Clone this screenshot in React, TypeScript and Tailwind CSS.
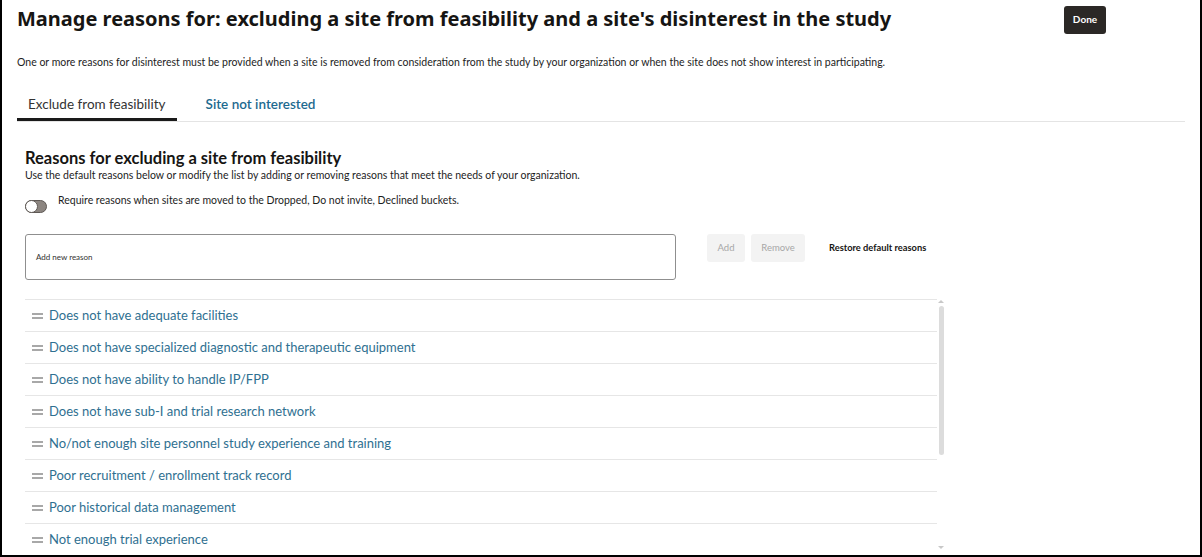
const reasons = [
  "Does not have adequate facilities",
  "Does not have specialized diagnostic and therapeutic equipment",
  "Does not have ability to handle IP/FPP",
  "Does not have sub-I and trial research network",
  "No/not enough site personnel study experience and training",
  "Poor recruitment / enrollment track record",
  "Poor historical data management",
  "Not enough trial experience",
];

function DragHandle() {
  return (
    <span className="mr-[6px] flex w-[11px] flex-col gap-[2px]">
      <span className="h-[2px] w-full bg-[#a8a8a8]" />
      <span className="h-[2px] w-full bg-[#a8a8a8]" />
    </span>
  );
}

function Toggle() {
  return (
    <span className="relative inline-flex h-[13px] w-[22px] items-center rounded-full border border-[#5f5955] bg-[#8c8580]">
      <span className="absolute left-[-1px] top-[-1px] h-[13px] w-[13px] rounded-full border border-[#5f5955] bg-white" />
    </span>
  );
}

export default function App() {
  return (
    <div
      className="h-[557px] w-[1202px] overflow-hidden border-x-2 border-b-2 border-black bg-white px-[15px] text-[#1d1d1d]"
      style={{ fontFamily: "Lato, 'Noto Sans', sans-serif" }}
    >
      {/* header */}
      <div className="flex h-[38px] items-center justify-between pr-[79px]">
        <h1
          className="text-[20px] font-bold leading-none text-[#161513]"
          style={{ fontFamily: "'Noto Sans', sans-serif" }}
        >
          Manage reasons for: excluding a site from feasibility and a site's disinterest in the study
        </h1>
        <button
          type="button"
          className="mt-[1px] h-[28px] w-[42px] rounded-[3px] bg-[#2b2826] text-[10px] font-bold text-white"
        >
          Done
        </button>
      </div>

      <p className="mt-[16px] text-[10.5px] leading-[16px] text-[#1d1d1d]">
        One or more reasons for disinterest must be provided when a site is removed from consideration from the study by your organization or when the site does not show interest in participating.
      </p>

      {/* tabs */}
      <div className="mt-[14px] flex gap-[18px] border-b border-[#e4e4e4]">
        <div className="flex h-[37px] items-center border-b-[3px] border-[#1a1a1a] px-[11px] pt-[7px] text-[13.5px] text-[#333]">
          Exclude from feasibility
        </div>
        <div className="flex h-[37px] items-center px-[11px] pt-[4px] text-[13.5px] font-semibold text-[#1d6a8f]">
          Site not interested
        </div>
      </div>

      <div className="px-[8px]">
        <h2 className="mt-[26px] text-[16.5px] font-bold leading-[20px] text-[#161513]">
          Reasons for excluding a site from feasibility
        </h2>
        <p className="text-[10.5px] leading-[14px]">
          Use the default reasons below or modify the list by adding or removing reasons that meet the needs of your organization.
        </p>

        <div className="mt-[10px] flex items-start gap-[11px]">
          <span className="pt-[3px]">
            <Toggle />
          </span>
          <span className="text-[10.5px] leading-[16px]">
            Require reasons when sites are moved to the Dropped, Do not invite, Declined buckets.
          </span>
        </div>

        <div className="mt-[15px] flex items-start">
          <div className="flex h-[46px] w-[651px] items-center rounded-[3px] border border-[#8f8f8f] px-[10px] text-[8px] text-[#333]">
            Add new reason
          </div>
          <button
            type="button"
            className="ml-[31px] h-[28px] w-[38px] rounded-[3px] bg-[#f3f3f3] text-[9.5px] text-[#a7a7a7]"
          >
            Add
          </button>
          <button
            type="button"
            className="ml-[6px] h-[28px] w-[54px] rounded-[3px] bg-[#f3f3f3] text-[9.5px] text-[#a7a7a7]"
          >
            Remove
          </button>
          <span className="ml-[24px] flex h-[28px] items-center text-[9.3px] font-bold text-[#161513]">
            Restore default reasons
          </span>
        </div>

        {/* list */}
        <div className="mt-[19px] flex">
          <div className="w-[912px] border-t border-[#e6e6e6]">
            {reasons.map((r) => (
              <div key={r} className="flex h-[32px] items-center border-b border-[#e6e6e6] pl-[7px]">
                <DragHandle />
                <span className="text-[13px] text-[#2f7091]">{r}</span>
              </div>
            ))}
          </div>
          <div className="ml-[1px] flex w-[6px] flex-col items-center pt-[1px]">
            <span className="h-0 w-0 border-x-[3px] border-b-[3px] border-x-transparent border-b-[#c8c8c8]" />
            <span className="mt-[3px] h-[149px] w-[5px] rounded-full bg-[#dcdcdc]" />
            <span className="mt-[91px] h-0 w-0 border-x-[3px] border-t-[3px] border-x-transparent border-t-[#c8c8c8]" />
          </div>
        </div>
      </div>
    </div>
  );
}
